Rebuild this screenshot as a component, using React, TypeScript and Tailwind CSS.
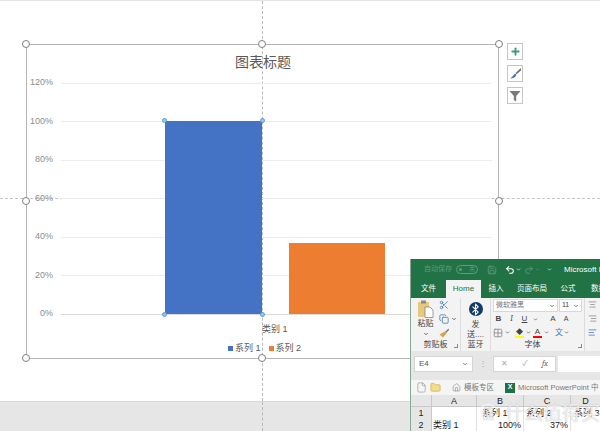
import {
  AlignCenter,
  AlignLeft,
  AlignRight,
  Bluetooth,
  ChevronDown,
  Copy,
  File,
  Folder,
  Grid2x2,
  Home,
  Plus,
  Redo2,
  Save,
  Scissors,
  Undo2,
} from "lucide-react";

const ticks = ["120%", "100%", "80%", "60%", "40%", "20%", "0%"];

function Handle({ className, blue }: { className: string; blue?: boolean }) {
  return (
    <span
      className={`absolute rounded-full ${
        blue
          ? "h-[5px] w-[5px] border border-[#5b9bd5] bg-[#9dc3e6]"
          : "h-[8px] w-[8px] border border-[#7f7f7f] bg-white"
      } ${className}`}
    />
  );
}

function Chart() {
  return (
    <div className="absolute left-[26px] top-[43px] flex h-[315px] w-[473px] flex-col border border-[#b5b5b5]">
      <div className="flex h-[34px] items-center justify-center pl-[1px] text-[14px] leading-[20px] text-[#595959]">
        图表标题
      </div>
      <div className="relative mt-[4px] flex h-[231px] flex-col justify-between pl-[1px]">
        {ticks.map((t) => (
          <div key={t} className="flex h-0 items-center">
            <span className="w-[25px] text-right text-[9px] text-[#8c8c8c]">{t}</span>
            <span className={`ml-[8px] h-px w-[431px] ${t === "0%" ? "bg-[#d9d9d9]" : "bg-[#ececec]"}`} />
          </div>
        ))}
        <div className="absolute left-[138px] top-[38px] flex h-[193px] items-end gap-[27px]">
          <div className="relative h-[193px] w-[97px] bg-[#4472c4]">
            <Handle blue className="left-[-3px] top-[-3px]" />
            <Handle blue className="right-[-3px] top-[-3px]" />
            <Handle blue className="bottom-[-3px] left-[-3px]" />
            <Handle blue className="bottom-[-3px] right-[-3px]" />
          </div>
          <div className="h-[71px] w-[96px] bg-[#ed7d31]" />
        </div>
      </div>
      <div className="mt-[9px] pl-[235px] text-[9px] leading-[12px] text-[#595959]">类别 1</div>
      <div className="mt-[7px] flex items-center pl-[201px] text-[9px] leading-[12px] text-[#595959]">
        <span className="h-[5px] w-[5px] bg-[#4472c4]" />
        <span className="ml-[2px]">系列 1</span>
        <span className="ml-[8px] h-[5px] w-[5px] bg-[#ed7d31]" />
        <span className="ml-[2px]">系列 2</span>
      </div>
    </div>
  );
}

function ChartTools() {
  return (
    <div className="absolute left-[507px] top-[42px] flex w-[16px] flex-col gap-[5px]">
      <button className="flex h-[17px] items-center justify-center border border-[#c6c6c6] bg-white">
        <Plus size={11} strokeWidth={4} className="text-[#3f9a7c]" />
      </button>
      <button className="flex h-[17px] items-center justify-center border border-[#c6c6c6] bg-white">
        <svg width="13" height="13" viewBox="0 0 13 13">
          <path d="M12 1 6.500 6l1 1.200L12 3.500z" fill="#707070" />
          <path d="M6 6.500 7.500 8C6.500 10.500 4 11.500 1 11.500 3 10.500 4.500 8 6 6.500z" fill="#3f78c8" />
        </svg>
      </button>
      <button className="flex h-[17px] items-center justify-center border border-[#c6c6c6] bg-white">
        <svg width="12" height="12" viewBox="0 0 12 12">
          <path d="M0.500 1h11L7.200 6v5.500L4.800 10V6z" fill="#7a7a7a" />
        </svg>
      </button>
    </div>
  );
}

function Launcher() {
  return <span className="absolute bottom-[3px] right-[2px] h-[4px] w-[4px] border-b border-r border-[#888]" />;
}

function Ribbon() {
  return (
    <div className="flex h-[53px] bg-[#f3f3f3] text-[#444]">
      <div className="relative flex w-[50px] flex-col border-r border-[#dcdcdc]">
        <div className="flex flex-1 pl-[6px] pt-[2px]">
          <div className="flex w-[17px] flex-col items-center">
            <svg width="17" height="18" viewBox="0 0 17 18">
              <rect x="1" y="2" width="11" height="15" fill="#e8c77f" />
              <rect x="4" y="0.500" width="5" height="3" fill="#8a8a8a" />
              <path d="M8 7h5l3 3v7.500H8z" fill="#fff" stroke="#777" strokeWidth="0.700" />
            </svg>
            <span className="mt-[1px] text-[8px] leading-[10px]">粘贴</span>
            <ChevronDown size={6} strokeWidth={3} className="mt-[2px]" />
          </div>
          <div className="ml-[5px] flex flex-col gap-[4px]">
            <Scissors size={10} className="text-[#4a7fb5]" />
            <span className="flex items-center">
              <Copy size={10} className="text-[#4a7fb5]" />
              <ChevronDown size={6} strokeWidth={3} className="ml-[2px]" />
            </span>
            <svg width="10" height="10" viewBox="0 0 10 10">
              <path d="M9.500 0.500 6 4l1 1 3-3z" fill="#777" />
              <path d="M5.500 3.500 7.500 5.500 4 9.500 0.500 6.500z" fill="#d6a84a" />
            </svg>
          </div>
        </div>
        <div className="flex h-[12px] items-center justify-center pb-[1px] text-[8px] leading-[10px]">剪贴板</div>
        <Launcher />
      </div>
      <div className="flex w-[30px] flex-col items-center border-r border-[#dcdcdc]">
        <div className="mt-[4px] flex h-[16px] w-[14px] items-center justify-center rounded-full bg-[#0f3a6b]">
          <Bluetooth size={13} className="text-white" />
        </div>
        <span className="mt-[4px] text-center text-[8px] leading-[10px]">
          发
          <br />
          送....
        </span>
        <div className="mt-auto flex h-[12px] items-center pb-[1px] text-[8px] leading-[10px]">蓝牙</div>
      </div>
      <div className="relative flex w-[94px] flex-col border-r border-[#dcdcdc] pt-[1px]">
        <div className="flex gap-px pl-[2px]">
          <div className="flex h-[13px] w-[65px] items-center justify-between border border-[#d8d8d8] bg-white px-[2px] text-[7px] text-[#777]">
            微软雅黑
            <ChevronDown size={6} strokeWidth={3} className="text-[#444]" />
          </div>
          <div className="flex h-[13px] w-[23px] items-center justify-between border border-[#d8d8d8] bg-white px-[2px] text-[7px]">
            11
            <ChevronDown size={6} strokeWidth={3} />
          </div>
        </div>
        <div className="mt-[1px] flex h-[13px] items-center pl-[1px] text-[8px]">
          <b className="w-[13px] text-center">B</b>
          <i className="w-[13px] text-center font-serif">I</i>
          <u className="w-[13px] text-center">U</u>
          <ChevronDown size={5} strokeWidth={3} className="ml-[2px]" />
          <span className="ml-[11px] w-[8px] text-center">A</span>
          <span className="ml-[5px] w-[8px] text-center text-[7px]">A</span>
        </div>
        <div className="mt-[1px] flex h-[13px] items-center">
          <Grid2x2 size={10} className="ml-[2px] text-[#888]" />
          <ChevronDown size={5} strokeWidth={3} className="ml-[2px]" />
          <span className="ml-[5px] w-[9px] border-b-2 border-[#ffff00] text-center text-[7px] leading-[9px]">◆</span>
          <ChevronDown size={5} strokeWidth={3} className="ml-[2px]" />
          <span className="ml-[2px] w-[9px] border-b-2 border-[#ff0000] text-center text-[8px] leading-[9px]">A</span>
          <ChevronDown size={5} strokeWidth={3} className="ml-[2px]" />
          <span className="ml-[6px] text-[8px] leading-[9px] text-[#3a78b5]">文</span>
          <ChevronDown size={5} strokeWidth={3} className="ml-[1px]" />
        </div>
        <div className="mt-auto flex h-[12px] items-center justify-center pb-[1px] pr-[10px] text-[8px] leading-[10px]">字体</div>
        <Launcher />
      </div>
      <div className="flex flex-col gap-[5px] pl-[3px] pt-[2px] text-[#888]">
        <AlignCenter size={9} />
        <AlignRight size={9} />
        <AlignLeft size={9} className="text-[#3a78b5]" />
      </div>
    </div>
  );
}

function Sheet() {
  return (
    <div className="grid grid-cols-[21px_45px_47px_47px_30px] grid-rows-[12px_12px_12px] bg-white text-[9px] leading-[12px] text-[#222]">
      <div className="border-b border-r border-[#c8c8c8] bg-[#e6e6e6]" />
      {["A", "B", "C", "D"].map((c) => (
        <div key={c} className="border-b border-r border-[#c8c8c8] bg-[#e6e6e6] text-center">
          {c}
        </div>
      ))}
      <div className="border-r border-[#c8c8c8] bg-[#e6e6e6] text-center">1</div>
      <div className="border-r border-[#e2e2e2]" />
      <div className="border-r border-[#e2e2e2] pl-[5px]">系列 1</div>
      <div className="border-r border-[#e2e2e2] pl-[2px]">系列 2</div>
      <div className="pl-[3px]">系列 3</div>
      <div className="border-r border-[#c8c8c8] bg-[#e6e6e6] text-center">2</div>
      <div className="border-r border-[#e2e2e2] pl-[1px]">类别 1</div>
      <div className="border-r border-[#e2e2e2] pr-[2px] text-right">100%</div>
      <div className="border-r border-[#e2e2e2] pr-[2px] text-right">37%</div>
      <div />
    </div>
  );
}

function ExcelWindow() {
  return (
    <div className="absolute left-[410px] top-[259px] flex h-[172px] w-[190px] flex-col overflow-hidden border-l border-[#8aa896] bg-[#e6e6e6]">
      <div className="flex h-[21px] items-center whitespace-nowrap bg-[#217346] pl-[13px] text-[8px] text-white *:shrink-0">
        <span className="w-[28px] text-[7px] text-[#5f9c7b]">自动保存</span>
        <span className="ml-[4px] flex h-[9px] w-[22px] items-center justify-between rounded-full border border-[#5f9c7b] px-[2px] text-[6px] text-[#5f9c7b]">
          <span className="h-[3px] w-[3px] rounded-full bg-[#5f9c7b]" />关
        </span>
        <Save size={10} className="ml-[9px] text-[#5f9c7b]" />
        <Undo2 size={10} className="ml-[8px]" strokeWidth={2.500} />
        <ChevronDown size={5} strokeWidth={3} className="ml-[1px]" />
        <Redo2 size={10} className="ml-[3px] text-[#5f9c7b]" />
        <ChevronDown size={5} strokeWidth={3} className="ml-[1px] text-[#5f9c7b]" />
        <ChevronDown size={5} strokeWidth={3} className="ml-[7px]" />
        <span className="ml-[12px]">Microsoft P</span>
      </div>
      <div className="flex h-[18px] items-center whitespace-nowrap bg-[#217346] text-[7.500px] text-white *:shrink-0">
        <span className="w-[35px] text-center">文件</span>
        <span className="flex h-full w-[35px] items-center justify-center bg-[#f3f3f3] text-[8px] text-[#217346]">Home</span>
        <span className="w-[30px] text-center">插入</span>
        <span className="w-[42px] text-center">页面布局</span>
        <span className="w-[30px] text-center">公式</span>
        <span className="ml-[8px]">数据</span>
      </div>
      <Ribbon />
      <div className="flex h-[29px] items-start pl-[3px] pt-[5px]">
        <div className="flex h-[16px] w-[59px] items-center justify-between border border-[#d5d5d5] bg-white px-[4px] text-[8px] text-[#555]">
          E4
          <ChevronDown size={6} strokeWidth={3} />
        </div>
        <span className="mx-[6px] text-[8px] leading-[16px] text-[#999]">⋮</span>
        <div className="flex h-[16px] w-[63px] items-center justify-around border border-[#d5d5d5] bg-white text-[8px] text-[#aaa]">
          <span>✕</span>
          <span>✓</span>
          <i className="font-serif text-[#666]">fx</i>
        </div>
        <div className="ml-[2px] h-[16px] flex-1 bg-white" />
      </div>
      <div className="flex h-[15px] items-center whitespace-nowrap bg-[#f5f5f5] pl-[5px] text-[7.500px] text-[#777] *:shrink-0">
        <File size={11} strokeWidth={1.500} className="text-[#999]" />
        <Folder size={11} className="ml-[3px] fill-[#f5dc8c] text-[#d8b95c]" />
        <Home size={9} className="ml-[11px] text-[#999]" />
        <span className="ml-[3px] w-[30px]">模板专区</span>
        <span className="ml-[11px] flex h-[10px] w-[10px] items-center justify-center bg-[#1e7145] text-[7px] font-bold text-white">X</span>
        <span className="ml-[3px]">Microsoft PowerPoint 中</span>
      </div>
      <Sheet />
    </div>
  );
}

function ChartHandles() {
  return (
    <>
      <Handle className="left-[22px] top-[39px]" />
      <Handle className="left-[258px] top-[39px]" />
      <Handle className="left-[495px] top-[39px]" />
      <Handle className="left-[22px] top-[196px]" />
      <Handle className="left-[495px] top-[196px]" />
      <Handle className="left-[22px] top-[353px]" />
      <Handle className="left-[258px] top-[353px]" />
    </>
  );
}

export default function App() {
  return (
    <div className="relative flex h-[431px] w-[600px] flex-col overflow-hidden bg-white font-['Liberation_Sans','Noto_Sans_CJK_SC',sans-serif]">
      <div className="relative h-[401px] border-t border-[#e4e4e4] bg-white">
        <div className="absolute left-[262px] top-0 h-full border-l border-dashed border-[#b8b8b8]" />
        <div className="absolute left-0 top-[197px] w-full border-t border-dashed border-[#c4c4c4]" />
        <Chart />
        <ChartHandles />
        <ChartTools />
      </div>
      <div className="relative h-[30px] border-t border-[#d8d8d8] bg-[#e6e6e6]">
        <div className="absolute bottom-0 left-[262px] top-0 border-l border-dashed border-[#b8b8b8]" />
      </div>
      <ExcelWindow />
      <div className="absolute left-[478px] top-[402px] flex items-center text-[19px] leading-[24px] text-white/75 [text-shadow:0_0_1px_#b0b0b0]">
        <span className="mr-[7px] flex h-[20px] w-[20px] items-center justify-center rounded-full border border-white/80 text-[13px]">值</span>
        什么值得买
      </div>
    </div>
  );
}
